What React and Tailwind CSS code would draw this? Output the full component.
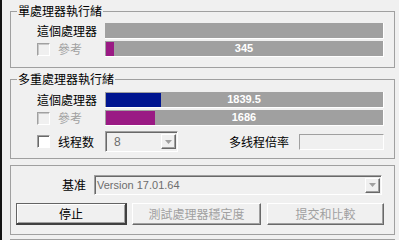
import React from 'react';

const cjk = "font-['Noto_Sans_CJK_TC','Noto_Sans_CJK_SC',sans-serif]";
const latin = "font-['Liberation_Sans',Arial,sans-serif]";

const GroupBox = ({ title, className = '', children }) => (
  <fieldset className={`border border-[#a0a0a0] ${className}`}>
    {title && (
      <legend className={`ml-[6px] px-[1px] text-[12px] leading-[16px] text-black ${cjk}`}>
        {title}
      </legend>
    )}
    {children}
  </fieldset>
);

const CheckBox = ({ disabled = false }) => (
  <div
    className={`w-[13px] h-[13px] shrink-0 border border-t-[#a0a0a0] border-l-[#a0a0a0] border-r-white border-b-white ${
      disabled ? 'bg-[#f0f0f0] shadow-[inset_1px_1px_0_#c8c8c8]' : 'bg-white shadow-[inset_1px_1px_0_#696969]'
    }`}
  />
);

const Bar = ({ value, fill = 0, color }) => (
  <div className="relative flex-1 h-[16px] bg-[#a0a0a0] border-r border-b border-white flex items-center justify-center">
    {fill > 0 && (
      <div
        className="absolute left-[1px] top-[1px] bottom-0"
        style={{ width: fill, background: color }}
      />
    )}
    {value && (
      <span className={`relative text-white font-bold text-[11px] leading-none ${latin}`}>{value}</span>
    )}
  </div>
);

const Arrow = () => (
  <div className="w-[15px] h-[15px] bg-[#f0f0f0] border border-t-white border-l-white border-r-[#696969] border-b-[#696969] shadow-[inset_-1px_-1px_0_#a0a0a0] flex items-center justify-center">
    <svg width="7" height="4" viewBox="0 0 7 4">
      <path d="M0 0h7L3.5 4z" fill="#a0a0a0" />
    </svg>
  </div>
);

const Sunken = ({ className = '', children }) => (
  <div
    className={`bg-[#f0f0f0] border border-t-[#a0a0a0] border-l-[#a0a0a0] border-r-white border-b-white shadow-[inset_1px_1px_0_#696969] ${className}`}
  >
    {children}
  </div>
);

const Row = ({ label, disabled, check, children }) => (
  <div className="flex items-center h-[16px]">
    <div className="w-[68px] flex items-center shrink-0">
      {check && <CheckBox disabled={disabled} />}
      <span
        className={`text-[12px] leading-none ${cjk} ${check ? 'ml-[8px]' : ''} ${
          disabled ? 'text-[#a0a0a0]' : 'text-black'
        }`}
      >
        {label}
      </span>
    </div>
    {children}
  </div>
);

const Button = ({ label, width, primary, disabled, className = '' }) => (
  <div
    className={`h-[22px] shrink-0 flex items-center justify-center bg-[#f0f0f0] text-[12px] ${cjk} ${
      primary
        ? 'border border-[#646464] shadow-[inset_1px_1px_0_#fff,inset_-1px_-1px_0_#a0a0a0] border-b-2 border-r-2 border-b-[#404040] border-r-[#404040]'
        : 'border border-t-white border-l-white border-r-[#696969] border-b-[#696969] shadow-[inset_-1px_-1px_0_#a0a0a0]'
    } ${disabled ? 'text-[#a0a0a0]' : 'text-black'} ${className}`}
    style={{ width }}
  >
    {label}
  </div>
);

export default function App() {
  return (
    <div className="w-[399px] h-[240px] overflow-hidden bg-[#f0f0f0] flex">
      <div className="w-[2px] shrink-0 bg-[#141414]" />
      <div className="flex-1 pl-[8px] pr-[4px] pt-[3px] flex flex-col">
        <GroupBox title="單處理器執行緒">
          <div className="pt-[4px] pb-[10px] pl-[26px] pr-[10px] flex flex-col gap-[2px]">
            <Row label="這個處理器">
              <Bar />
            </Row>
            <Row label="參考" check disabled>
              <Bar value="345" fill={8} color="#9a1a84" />
            </Row>
          </div>
        </GroupBox>

        <GroupBox title="多重處理器執行緒" className="mt-[3px]">
          <div className="pt-[5px] pb-[6px] pl-[26px] pr-[10px] flex flex-col gap-[2px]">
            <Row label="這個處理器">
              <Bar value="1839.5" fill={55} color="#001590" />
            </Row>
            <Row label="參考" check disabled>
              <Bar value="1686" fill={49} color="#9a1a84" />
            </Row>
            <div className="flex items-center h-[21px] mt-[3px]">
              <div className="w-[68px] flex items-center shrink-0">
                <CheckBox />
                <span className={`ml-[8px] text-[12px] leading-none text-black ${cjk}`}>线程数</span>
              </div>
              <Sunken className="w-[73px] h-[21px] flex items-center justify-between pl-[8px] pr-[1px]">
                <span className={`text-[12px] leading-none text-[#6d6d6d] ${latin}`}>8</span>
                <Arrow />
              </Sunken>
              <div className="flex-1" />
              <span className={`text-[12px] leading-none text-black ${cjk}`}>多线程倍率</span>
              <Sunken className="ml-[10px] w-[85px] h-[16px] shadow-none border-t-[#a0a0a0]" />
            </div>
          </div>
        </GroupBox>

        <GroupBox className="mt-[6px]">
          <div className="pt-[9px] pb-[9px] pl-[5px] pr-[9px]">
            <div className="flex items-center h-[20px]">
              <span className={`w-[70px] text-right text-[12px] leading-none text-black ${cjk}`}>基准</span>
              <Sunken className="ml-[8px] w-[288px] h-[20px] flex items-center justify-between pl-[2px] pr-[1px]">
                <span className={`text-[11px] leading-none text-[#6d6d6d] ${latin}`}>Version 17.01.64</span>
                <Arrow />
              </Sunken>
            </div>
            <div className="flex mt-[8px]">
              <Button label="停止" width={111} primary />
              <Button label="測試處理器穩定度" width={129} disabled className="ml-[5px]" />
              <Button label="提交和比較" width={117} disabled className="ml-[6px]" />
            </div>
          </div>
        </GroupBox>

        <GroupBox className="mt-[4px] h-[20px] shrink-0" />
      </div>
    </div>
  );
}
